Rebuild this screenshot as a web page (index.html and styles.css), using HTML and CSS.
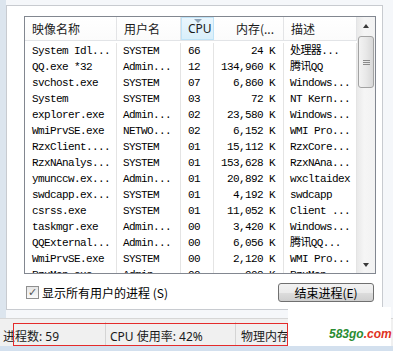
FILE: index.html
```html
<!DOCTYPE html>
<html lang="zh-CN">
<head>
  <meta charset="UTF-8">
  <title>Windows 任务管理器 - 进程</title>
  <link rel="stylesheet" href="styles.css">
</head>
<body>
  <div class="window">
    <div class="main">
      <div class="edge"></div>
      <div class="page">
        <div class="listbox">
          <div class="list">
            <div class="head">
              <div class="hcell">映像名称</div>
              <div class="hcell">用户名</div>
              <div class="hcell sorted"><span class="arrow"></span>CPU</div>
              <div class="hcell right">内存(...</div>
              <div class="hcell">描述</div>
            </div>
            <div class="rows">
              <div class="row"><span>System Idl...</span><span>SYSTEM</span><span>66</span><span class="num">24 K</span><span>处理器...</span></div>
              <div class="row"><span>QQ.exe *32</span><span>Admin...</span><span>12</span><span class="num">134,960 K</span><span>腾讯QQ</span></div>
              <div class="row"><span>svchost.exe</span><span>SYSTEM</span><span>07</span><span class="num">6,860 K</span><span>Windows...</span></div>
              <div class="row"><span>System</span><span>SYSTEM</span><span>03</span><span class="num">72 K</span><span>NT Kern...</span></div>
              <div class="row"><span>explorer.exe</span><span>Admin...</span><span>02</span><span class="num">23,580 K</span><span>Windows...</span></div>
              <div class="row"><span>WmiPrvSE.exe</span><span>NETWO...</span><span>02</span><span class="num">6,152 K</span><span>WMI Pro...</span></div>
              <div class="row"><span>RzxClient....</span><span>SYSTEM</span><span>01</span><span class="num">15,112 K</span><span>RzxCore...</span></div>
              <div class="row"><span>RzxNAnalys...</span><span>SYSTEM</span><span>01</span><span class="num">153,628 K</span><span>RzxNAna...</span></div>
              <div class="row"><span>ymunccw.ex...</span><span>Admin...</span><span>01</span><span class="num">20,892 K</span><span>wxcltaidex</span></div>
              <div class="row"><span>swdcapp.ex...</span><span>SYSTEM</span><span>01</span><span class="num">4,192 K</span><span>swdcapp</span></div>
              <div class="row"><span>csrss.exe</span><span>SYSTEM</span><span>01</span><span class="num">11,052 K</span><span>Client ...</span></div>
              <div class="row"><span>taskmgr.exe</span><span>Admin...</span><span>00</span><span class="num">3,420 K</span><span>Windows...</span></div>
              <div class="row"><span>QQExternal...</span><span>Admin...</span><span>00</span><span class="num">6,056 K</span><span>腾讯QQ...</span></div>
              <div class="row"><span>WmiPrvSE.exe</span><span>SYSTEM</span><span>00</span><span class="num">2,120 K</span><span>WMI Pro...</span></div>
              <div class="row"><span>RzxMon.exe</span><span>Admin...</span><span>00</span><span class="num">908 K</span><span>RzxMon...</span></div>
            </div>
          </div>
          <div class="vscroll">
            <div class="sbtn"><span class="tri up"></span></div>
            <div class="track">
              <div class="thumb"><span class="grip"></span></div>
            </div>
            <div class="sbtn"><span class="tri down"></span></div>
          </div>
        </div>
        <div class="actions">
          <label class="check"><span class="box">&#10003;</span>显示所有用户的进程 (S)</label>
          <button class="end" type="button">结束进程(E)</button>
        </div>
      </div>
    </div>

    <!-- Status bar -->
    <div class="status">
      <div class="seg seg-count">进程数: 59</div>
      <div class="seg seg-cpu">CPU 使用率: 42%</div>
      <div class="seg seg-mem">物理内存: 61%</div>
    </div>
    <div class="taskbar"></div>

    <!-- Overlays -->
    <div class="mark-box"></div>
    <div class="watermark"><span class="wm-green">583go</span><span class="wm-red">.com</span></div>
  </div>
</body>
</html>
```

FILE: styles.css
```css
* {
  box-sizing: border-box;
}

body {
  margin: 0;
  width: 393px;
  height: 351px;
  overflow: hidden;
  background: #f0f0f0;
  font-family: "Noto Sans CJK SC", sans-serif;
  color: #000;
}

.window {
  position: relative;
  height: 351px;
  display: flex;
  flex-direction: column;
}

.main {
  display: flex;
  padding: 5px 10px 8px 0;
  background: #f5f7fa;
}

.edge {
  width: 6px;
  background: #dce5ee;
  margin-top: -5px;
  margin-bottom: -8px;
}

.page {
  flex: 1;
  background: #fff;
  border: 1px solid #c8cbd0;
  padding: 10px 5px 7px 17px;
}

/* List view */
.listbox {
  display: flex;
  width: 352px;
  height: 258px;
  border: 1px solid #828790;
  background: #fff;
}

.list {
  width: 332px;
  overflow: hidden;
}

.head {
  display: grid;
  grid-template-columns: 92px 64px 33px 70px 73px;
  height: 24px;
  border-bottom: 1px solid #e2e4e7;
}

.hcell {
  position: relative;
  display: flex;
  align-items: center;
  padding-left: 7px;
  font-size: 12px;
  color: #1a1a1a;
  border-right: 1px solid #e3e4e6;
  background: linear-gradient(#ffffff, #fbfbfb);
}

.hcell.right {
  justify-content: flex-end;
  padding-right: 9px;
}

.hcell.sorted {
  background: linear-gradient(#eaf6fd, #d9effa);
  border: 1px solid #bfe3f7;
  font-family: "Noto Sans", sans-serif;
  padding-left: 6px;
}

.arrow {
  position: absolute;
  top: 1px;
  left: 12px;
  border-left: 4px solid transparent;
  border-right: 4px solid transparent;
  border-top: 4px solid #8ea3b8;
}

.rows {
  padding-top: 2px;
}

.row {
  display: grid;
  grid-template-columns: 92px 64px 33px 70px 73px;
  height: 16px;
  font-family: "Liberation Mono", "Noto Sans CJK SC", monospace;
  font-size: 11px;
  letter-spacing: -0.6px;
  line-height: 16px;
}

.row span {
  padding-left: 7px;
  white-space: nowrap;
  overflow: hidden;
  border-right: 1px solid #e4e4e4;
}

.row span:nth-child(2),
.row span:nth-child(5) {
  padding-left: 6px;
}

.row span.num {
  text-align: right;
  padding-left: 0;
  padding-right: 8px;
}

/* Scrollbar */
.vscroll {
  width: 18px;
  display: flex;
  flex-direction: column;
  background: linear-gradient(90deg, #e9e9e9, #f5f5f5 40%, #f2f2f2);
}

.sbtn {
  height: 17px;
  display: flex;
  align-items: center;
  justify-content: center;
}

.tri {
  border-left: 3px solid transparent;
  border-right: 3px solid transparent;
}

.tri.up {
  border-bottom: 4px solid #3a3a3a;
}

.tri.down {
  border-top: 4px solid #3a3a3a;
}

.track {
  flex: 1;
  padding-top: 2px;
}

.thumb {
  margin: 0 1px;
  height: 52px;
  border: 1px solid #a3a3a3;
  border-radius: 3px;
  background: linear-gradient(90deg, #f3f3f3, #e8e8e8 50%, #d8d8d8);
  display: flex;
  align-items: center;
  justify-content: center;
}

.grip {
  width: 7px;
  height: 5px;
  border-top: 1px solid #8a8a8a;
  border-bottom: 1px solid #8a8a8a;
  position: relative;
}

.grip::after {
  content: "";
  position: absolute;
  left: 0;
  right: 0;
  top: 1px;
  border-top: 1px solid #8a8a8a;
}

/* Bottom actions */
.actions {
  display: flex;
  align-items: center;
  justify-content: space-between;
  margin-top: 9px;
  height: 19px;
  width: 352px;
  padding: 0 2px 0 2px;
}

.check {
  display: flex;
  align-items: center;
  gap: 3px;
  font-size: 12px;
}

.box {
  width: 13px;
  height: 13px;
  border: 1px solid #8f8f8f;
  background: linear-gradient(#e6e6e6, #fafafa);
  font-size: 11px;
  line-height: 11px;
  text-align: center;
  color: #555;
  font-family: "DejaVu Sans", sans-serif;
}

.end {
  width: 96px;
  height: 19px;
  padding: 0;
  font-family: "Noto Sans CJK SC", sans-serif;
  font-size: 12px;
  color: #000;
  border: 1px solid #707070;
  border-radius: 3px;
  background: linear-gradient(#f2f2f2 0%, #ebebeb 50%, #dddddd 51%, #cfcfcf 100%);
}

/* Status bar */
.status {
  display: flex;
  height: 28px;
  border-top: 1px solid #d6d6d6;
  background: #f0f0f0;
  font-family: "Noto Sans", "Noto Sans CJK SC", sans-serif;
  font-size: 12px;
  color: #1a1a1a;
}

.seg {
  display: flex;
  align-items: center;
  padding-top: 4px;
  white-space: nowrap;
  overflow: hidden;
  border-right: 1px solid #d4d4d4;
  margin: 3px 0 0;
}

.seg-count {
  width: 106px;
  padding-left: 3px;
}

.seg-cpu {
  width: 130px;
  padding-left: 4px;
}

.seg-mem {
  flex: 1;
  padding-left: 5px;
  border-right: none;
}

.taskbar {
  flex: 1;
  background: #d3e0ee;
}

/* Overlays */
.mark-box {
  position: absolute;
  left: 13px;
  top: 323px;
  width: 275px;
  height: 23px;
  border: 1.5px solid #e42b2b;
}

.watermark {
  position: absolute;
  left: 288px;
  top: 307px;
  width: 103px;
  height: 39px;
  background: #fff;
  padding: 20px 0 0 41px;
  font-family: "Liberation Sans", sans-serif;
  font-size: 12px;
  font-weight: bold;
  font-style: italic;
  line-height: 14px;
}

.wm-green {
  color: #2a8c32;
}

.wm-red {
  color: #e0321e;
}
```
